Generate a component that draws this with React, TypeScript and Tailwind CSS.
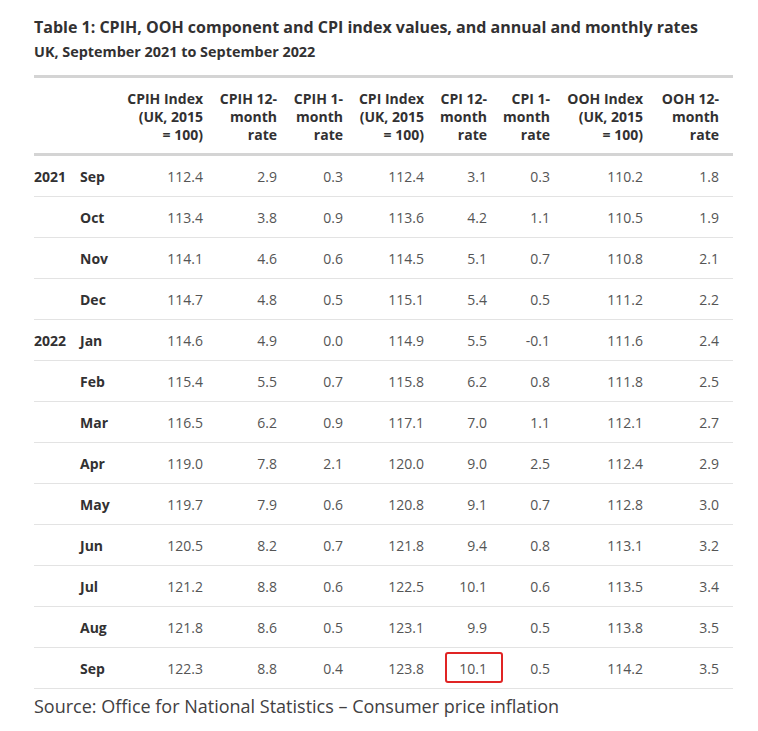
import React from 'react';

type Row = { year?: string; month: string; values: string[] };

const headers = [
  ['CPIH Index', '(UK, 2015', '= 100)'],
  ['CPIH 12-', 'month', 'rate'],
  ['CPIH 1-', 'month', 'rate'],
  ['CPI Index', '(UK, 2015', '= 100)'],
  ['CPI 12-', 'month', 'rate'],
  ['CPI 1-', 'month', 'rate'],
  ['OOH Index', '(UK, 2015', '= 100)'],
  ['OOH 12-', 'month', 'rate'],
];

const rows: Row[] = [
  { year: '2021', month: 'Sep', values: ['112.4', '2.9', '0.3', '112.4', '3.1', '0.3', '110.2', '1.8'] },
  { month: 'Oct', values: ['113.4', '3.8', '0.9', '113.6', '4.2', '1.1', '110.5', '1.9'] },
  { month: 'Nov', values: ['114.1', '4.6', '0.6', '114.5', '5.1', '0.7', '110.8', '2.1'] },
  { month: 'Dec', values: ['114.7', '4.8', '0.5', '115.1', '5.4', '0.5', '111.2', '2.2'] },
  { year: '2022', month: 'Jan', values: ['114.6', '4.9', '0.0', '114.9', '5.5', '-0.1', '111.6', '2.4'] },
  { month: 'Feb', values: ['115.4', '5.5', '0.7', '115.8', '6.2', '0.8', '111.8', '2.5'] },
  { month: 'Mar', values: ['116.5', '6.2', '0.9', '117.1', '7.0', '1.1', '112.1', '2.7'] },
  { month: 'Apr', values: ['119.0', '7.8', '2.1', '120.0', '9.0', '2.5', '112.4', '2.9'] },
  { month: 'May', values: ['119.7', '7.9', '0.6', '120.8', '9.1', '0.7', '112.8', '3.0'] },
  { month: 'Jun', values: ['120.5', '8.2', '0.7', '121.8', '9.4', '0.8', '113.1', '3.2'] },
  { month: 'Jul', values: ['121.2', '8.8', '0.6', '122.5', '10.1', '0.6', '113.5', '3.4'] },
  { month: 'Aug', values: ['121.8', '8.6', '0.5', '123.1', '9.9', '0.5', '113.8', '3.5'] },
  { month: 'Sep', values: ['122.3', '8.8', '0.4', '123.8', '10.1', '0.5', '114.2', '3.5'] },
];

// year | month | 8 numeric columns
const grid = 'grid grid-cols-[46px_40px_91px_74px_66px_81px_63px_63px_93px_82px]';

export default function App() {
  return (
    <div className="w-[758px] h-[731px] bg-white pl-[34px] pt-[16px] text-[#323132]" style={{ fontFamily: '"Open Sans", "Liberation Sans", sans-serif' }}>
      <h1 className="text-[16px] leading-[22px] font-bold">
        Table 1: CPIH, OOH component and CPI index values, and annual and monthly rates
      </h1>
      <h2 className="text-[14.4px] leading-[20px] font-bold mt-[4px]">UK, September 2021 to September 2022</h2>

      <div className="w-[699px] mt-[13px]">
        {/* Header */}
        <div className={`${grid} border-t-[3px] border-b-[3px] border-[#d4d4d4] pt-[12px] pb-[9px]`}>
          <div />
          <div />
          {headers.map((h, i) => (
            <div
              key={i}
              className={`text-right text-[14px] leading-[18px] font-bold ${i === 7 ? 'pr-[14px]' : 'pr-[8px]'}`}
            >
              {h.map(line => (
                <div key={line}>{line}</div>
              ))}
            </div>
          ))}
        </div>

        {/* Body */}
        {rows.map((r, ri) => (
          <div key={ri} className={`${grid} h-[41px] items-center border-b border-[#e3e3e3] text-[14px]`}>
            <div className="font-bold">{r.year ?? ''}</div>
            <div className="font-bold">{r.month}</div>
            {r.values.map((v, i) => (
              <div
                key={i}
                className={`relative text-right text-[#555555] ${i === 7 ? 'pr-[14px]' : 'pr-[8px]'}`}
              >
                {v}
                {ri === rows.length - 1 && i === 4 && (
                  <span className="absolute left-[13px] -right-[8px] -top-[6px] h-[31px] border-[2.5px] border-[#e02424] rounded-[3px]" />
                )}
              </div>
            ))}
          </div>
        ))}
      </div>

      <p className="text-[18px] leading-[24px] text-[#414042] mt-[5px]">
        Source: Office for National Statistics – Consumer price inflation
      </p>
    </div>
  );
}
